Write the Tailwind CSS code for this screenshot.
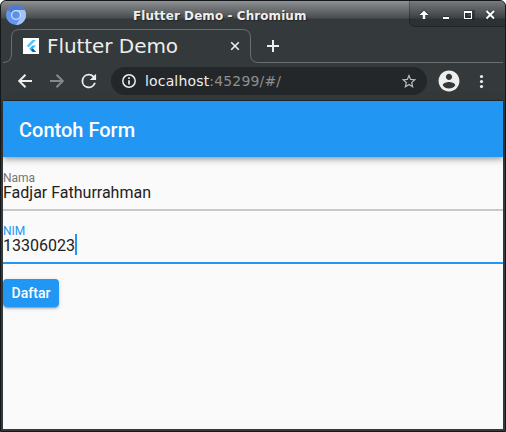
<!DOCTYPE html>
<html lang="id">
<head>
<meta charset="utf-8">
<title>Flutter Demo</title>
<script src="https://cdn.jsdelivr.net/npm/@tailwindcss/browser@4"></script>
</head>
<body class="bg-white overflow-hidden">
<div class="w-[506px] h-[432px] flex flex-col bg-[#343a3c] border border-[#13181a] rounded-t-[6px] overflow-hidden font-['DejaVu_Sans',sans-serif] text-[#eeeeec]">
  <!-- Title bar -->
  <header class="h-[27px] shrink-0 flex items-start bg-[linear-gradient(to_bottom,#929496_0px,#85878a_2px,#484d4f_17px,#343a3c_18px)]">
    <svg class="ml-[5px] mt-[4px] shrink-0" width="20" height="20" viewBox="0 0 20 20">
      <circle cx="10" cy="10" r="10" fill="#6397ee"/>
      <path d="M10 10L1.300 5A10 10 0 0 1 18.700 5Z" fill="#4c79d3"/>
      <path d="M10 5H18.700A10 10 0 0 1 10 20L14.500 12.500Z" fill="#a2c3f9"/>
      <circle cx="10" cy="10" r="5" fill="#d3e2fb"/>
      <circle cx="10" cy="10" r="3.800" fill="#5c90ea"/>
    </svg>
    <div class="ml-[107px] mt-[6px] w-[180px] text-[12px] leading-[18px] tracking-[0.070px] font-bold whitespace-nowrap [text-shadow:1px_1px_1px_#222]">Flutter Demo - Chromium</div>
    <div class="ml-auto w-[96px] h-[26px] rounded-bl-[6px] border-l border-b border-black/25 bg-black/15">
      <svg width="95" height="25" viewBox="0 0 95 25">
        <g fill="none" stroke="#1f2325" stroke-width="4" opacity=".55">
          <path d="M14 18V12M10.500 14.500L14 11L17.500 14.500M33 17H39M56 11H63V17H56ZM77 10.500L84 17.500M84 10.500L77 17.500"/>
        </g>
        <path d="M14 9.500L9.500 14H12.700V18H15.300V14H18.500Z" fill="#fff"/>
        <path d="M33 16H39V18H33Z" fill="#fff"/>
        <path d="M54 10H62V18H54ZM55 12V17H61V12Z" fill="#fff" fill-rule="evenodd"/>
        <path d="M76.500 10L84 17.500M84 10L76.500 17.500" stroke="#fff" stroke-width="2"/>
      </svg>
    </div>
  </header>
  <!-- Tab strip -->
  <div class="h-[35px] shrink-0 mx-[2px] grid">
    <svg class="col-start-1 row-start-1" width="500" height="35" viewBox="0 0 500 35" fill="none" stroke="#6a6f72">
      <path d="M0 34.500Q8.500 34.500 8.500 26V9.500Q8.500 1.500 16.500 1.500H239.500Q247.500 1.500 247.500 9.500V26.500Q247.500 34.500 255.500 34.500H500"/>
    </svg>
    <div class="col-start-1 row-start-1 flex items-center pl-[20px]">
      <svg class="shrink-0" width="16" height="16" viewBox="0 0 16 16">
        <path d="M0 0H16V16H0Z" fill="#fff"/>
        <path d="M9.500 2H13L5.500 9.500L3.800 7.800Z" fill="#4ac7fa"/>
        <path d="M9.500 7.500H13L9.800 10.700L13 14H9.500L6.200 10.700Z" fill="#35b5f6"/>
        <path d="M8 12.300L9.800 10.500L13 13.700H9.500Z" fill="#12559d"/>
      </svg>
      <span class="ml-[8px] w-[141px] text-[20px] leading-[24px] tracking-[-0.060px] whitespace-nowrap">Flutter Demo</span>
      <svg class="ml-[42px] shrink-0" width="10" height="10" viewBox="0 0 10 10" stroke="#eeeeec" stroke-width="1.600"><path d="M1.200 1.200L8.800 8.800M8.800 1.200L1.200 8.800"/></svg>
      <svg class="ml-[27px] shrink-0" width="12" height="12" viewBox="0 0 12 12" fill="#eeeeec"><path d="M5 0H7V5H12V7H7V12H5V7H0V5H5Z"/></svg>
    </div>
  </div>
  <!-- Toolbar -->
  <div class="h-[37px] shrink-0 mx-[2px] flex items-center pb-px">
    <svg class="ml-[12px] shrink-0" width="20" height="20" viewBox="0 0 20 20" fill="none" stroke="#eeeeec" stroke-width="2"><path d="M17 10H5M10.500 3.700L4.200 10L10.500 16.300"/></svg>
    <svg class="ml-[12px] shrink-0" width="20" height="20" viewBox="0 0 20 20" fill="none" stroke="#858988" stroke-width="2"><path d="M3 10H15M9.500 3.700L15.800 10L9.500 16.300"/></svg>
    <svg class="ml-[12px] shrink-0" width="20" height="20" viewBox="1.200 1 22 22" fill="#eeeeec"><path d="M17.650 6.350A7.960 7.960 0 0 0 12 4a8 8 0 1 0 7.730 10h-2.080A6 6 0 1 1 12 6c1.660 0 3.140.690 4.220 1.780L13 11h7V4z"/></svg>
    <div class="ml-[12px] w-[316px] h-[28px] rounded-full bg-[#242729] flex items-center">
      <svg class="ml-[10px] shrink-0" width="16" height="16" viewBox="0 0 16 16" fill="none" stroke="#eeeeec" stroke-width="1.500"><circle cx="8" cy="8" r="6.200"/><path d="M8 7.200V11.500M8 4.300V6" stroke-width="1.700"/></svg>
      <span class="ml-[8px] text-[14px] leading-[20px] tracking-[0.160px] whitespace-nowrap">localhost<span class="text-[#8c8f8f]">:45299/#/</span></span>
      <svg class="ml-auto mr-[10px] shrink-0" width="16" height="16" viewBox="1 0.500 22 22" fill="#bfc1c1"><path d="M22 9.240l-7.190-.620L12 2 9.190 8.630 2 9.240l5.460 4.730L5.820 21 12 17.270 18.180 21l-1.630-7.030L22 9.240zM12 15.400l-3.760 2.270 1-4.280-3.320-2.880 4.380-.380L12 6.100l1.710 4.040 4.380.380-3.320 2.880 1 4.280L12 15.400z"/></svg>
    </div>
    <svg class="ml-[10px] shrink-0" width="24" height="24" viewBox="0.500 0.500 23 23" fill="#eeeeec"><path d="M12 2C6.480 2 2 6.480 2 12s4.480 10 10 10 10-4.480 10-10S17.520 2 12 2zm0 3c1.660 0 3 1.340 3 3s-1.340 3-3 3-3-1.340-3-3 1.340-3 3-3zm0 14.200c-2.500 0-4.710-1.280-6-3.220.030-1.990 4-3.080 6-3.080 1.990 0 5.970 1.090 6 3.080-1.290 1.940-3.500 3.220-6 3.220z"/></svg>
    <svg class="ml-[15px] shrink-0" width="10" height="16" viewBox="0 0 10 16" fill="#eeeeec"><circle cx="5.500" cy="3.500" r="1.600"/><circle cx="5.500" cy="8.500" r="1.600"/><circle cx="5.500" cy="13.500" r="1.600"/></svg>
  </div>
  <!-- Page -->
  <main class="mx-[2px] mb-[2px] h-[329px] shrink-0 bg-[#fafafa] border-t border-[#252a2c] font-[Roboto,sans-serif] text-[#212121]">
    <h1 class="h-[56px] pl-4 pt-px flex items-center bg-[#2196f3] text-white text-[20px] font-medium shadow-[0_2px_4px_-1px_rgba(0,0,0,.2),0_4px_5px_rgba(0,0,0,.14),0_1px_10px_rgba(0,0,0,.12)]">Contoh Form</h1>
    <div class="h-[54px] pt-[14px] border-b-2 border-[#c9c9c9]">
      <div class="text-[12px] leading-[14px] text-[#757575]">Nama</div>
      <div class="text-[16px] leading-[16px]">Fadjar Fathurrahman</div>
    </div>
    <div class="h-[53px] pt-[13px] border-b-2 border-[#2196f3]">
      <div class="text-[12px] leading-[14px] text-[#2196f3]">NIM</div>
      <div class="h-[16px] flex items-center text-[16px] leading-[16px]">13306023<span class="mb-[3px] w-[2px] h-[21px] shrink-0 bg-[#2196f3]"></span></div>
    </div>
    <button class="mt-[15px] w-[56px] h-[28px] pt-px block rounded-[4px] bg-[#2196f3] text-white text-[14px] font-medium shadow-[0_3px_1px_-2px_rgba(0,0,0,.2),0_2px_2px_rgba(0,0,0,.14),0_1px_5px_rgba(0,0,0,.12)]">Daftar</button>
  </main>
</div>
</body>
</html>
